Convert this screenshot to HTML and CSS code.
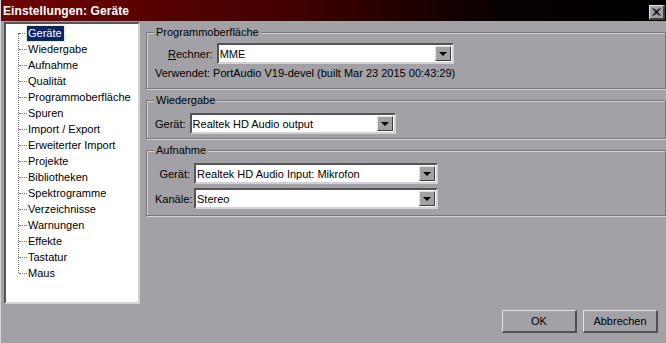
FILE: index.html
```html
<!DOCTYPE html>
<html lang="de">
<head>
  <meta charset="UTF-8">
  <title>Einstellungen: Geräte</title>
  <link rel="stylesheet" href="styles.css">
</head>
<body>
  <div class="window">
    <div class="titlebar">
      <span class="title">Einstellungen: Geräte</span>
      <div class="close-btn">
        <svg width="9" height="8" viewBox="0 0 9 8"><path d="M0.5 0.5 L7 7.5 M2 0.5 L8.5 7.5 M7 0.5 L0.5 7.5 M8.5 0.5 L2 7.5" stroke="#000" stroke-width="1"/></svg>
      </div>
    </div>
    <div class="content">
      <div class="tree">
        <div class="tree-line"></div>
        <div class="item selected"><span>Geräte</span></div>
        <div class="item"><span>Wiedergabe</span></div>
        <div class="item"><span>Aufnahme</span></div>
        <div class="item"><span>Qualität</span></div>
        <div class="item"><span>Programmoberfläche</span></div>
        <div class="item"><span>Spuren</span></div>
        <div class="item"><span>Import / Export</span></div>
        <div class="item"><span>Erweiterter Import</span></div>
        <div class="item"><span>Projekte</span></div>
        <div class="item"><span>Bibliotheken</span></div>
        <div class="item"><span>Spektrogramme</span></div>
        <div class="item"><span>Verzeichnisse</span></div>
        <div class="item"><span>Warnungen</span></div>
        <div class="item"><span>Effekte</span></div>
        <div class="item"><span>Tastatur</span></div>
        <div class="item"><span>Maus</span></div>
      </div>
      <div class="panel">
        <div class="group group-api">
          <span class="legend">Programmoberfläche</span>
          <div class="row">
            <label class="lbl lbl-rechner"><u>R</u>echner:</label>
            <div class="combo combo-rechner"><span class="value">MME</span><span class="arrow"></span></div>
          </div>
          <div class="info">Verwendet: PortAudio V19-devel (built Mar 23 2015 00:43:29)</div>
        </div>
        <div class="group group-play">
          <span class="legend">Wiedergabe</span>
          <div class="row">
            <label class="lbl">Gerät:</label>
            <div class="combo combo-play"><span class="value">Realtek HD Audio output</span><span class="arrow"></span></div>
          </div>
        </div>
        <div class="group group-rec">
          <span class="legend">Aufnahme</span>
          <div class="row">
            <label class="lbl lbl-wide">Gerät:</label>
            <div class="combo combo-rec"><span class="value">Realtek HD Audio Input: Mikrofon</span><span class="arrow"></span></div>
          </div>
          <div class="row">
            <label class="lbl lbl-wide">Kanäle:</label>
            <div class="combo combo-rec"><span class="value">Stereo</span><span class="arrow"></span></div>
          </div>
        </div>
      </div>
    </div>
    <div class="buttons">
      <div class="btn">OK</div>
      <div class="btn">Abbrechen</div>
    </div>
  </div>
</body>
</html>
```

FILE: styles.css
```css
body {
  margin: 0;
  font-family: "Liberation Sans", Arial, sans-serif;
  font-size: 11px;
  color: #000;
  background: #a2a1a6;
}

.window {
  width: 666px;
  height: 343px;
  display: flex;
  flex-direction: column;
  background: #a2a1a6;
  border-left: 1px solid #d4d3d8;
  box-sizing: border-box;
  overflow: hidden;
}

.titlebar {
  height: 21px;
  background: linear-gradient(90deg, #6e0303, #400000 45%, #080000 75%, #000 100%);
  display: flex;
  align-items: center;
  justify-content: space-between;
  padding: 0 1px 0 2px;
  flex-shrink: 0;
}

.title {
  color: #fff;
  font-weight: bold;
  font-size: 12px;
  letter-spacing: 0.1px;
}

.close-btn {
  width: 13px;
  height: 12px;
  background: #a2a1a6;
  border-top: 1px solid #e6e6e8;
  border-left: 1px solid #e6e6e8;
  border-right: 2px solid #404040;
  border-bottom: 2px solid #404040;
  display: flex;
  align-items: center;
  justify-content: center;
  margin-top: 3px;
}

.content {
  display: flex;
  padding: 1px 0 0 3px;
  height: 282px;
  flex-shrink: 0;
}

.tree {
  position: relative;
  width: 132px;
  height: 277px;
  background: #fff;
  border-top: 2px solid #555458;
  border-left: 2px solid #555458;
  border-right: 2px solid #d4d3d8;
  border-bottom: 2px solid #d4d3d8;
  padding-top: 1px;
  flex-shrink: 0;
}

.tree-line {
  position: absolute;
  left: 12px;
  top: 9px;
  height: 240px;
  border-left: 1px dotted #6f6f6f;
}

.item {
  height: 16px;
  display: flex;
  align-items: center;
  padding-left: 13px;
  white-space: nowrap;
}

.item::before {
  content: "";
  width: 8px;
  border-top: 1px dotted #6f6f6f;
}

.item span {
  padding: 1px 2px 2px 1px;
  line-height: 12px;
}

.item.selected span {
  background: #0a246a;
  color: #fff;
  outline: 1px dotted #d6d6a0;
}

.panel {
  flex: 1;
  padding: 10px 0 0 6px;
  display: flex;
  flex-direction: column;
  gap: 11px;
}

.group {
  position: relative;
  box-sizing: border-box;
  padding: 0 8px;
  border: 1px solid #76757a;
  box-shadow: inset 1px 1px 0 #d2d1d6, 1px 1px 0 #d2d1d6;
}

.legend {
  position: absolute;
  left: 7px;
  top: -7px;
  padding: 0 2px;
  background: #a2a1a6;
  line-height: 13px;
}

.group-api {
  height: 57px;
}

.group-play {
  height: 39px;
}

.group-rec {
  height: 66px;
}

.row {
  display: flex;
  align-items: center;
  margin-top: 12px;
}

.group-api .row {
  margin-top: 10px;
}

.group-rec .row + .row {
  margin-top: 4px;
}

.lbl {
  white-space: nowrap;
  margin-right: 4px;
}

.lbl-rechner {
  margin-left: 13px;
}

.lbl-wide {
  width: 35px;
  text-align: right;
}

.combo {
  box-sizing: border-box;
  height: 21px;
  background: #fff;
  border-top: 2px solid #545357;
  border-left: 2px solid #545357;
  border-right: 2px solid #d2d1d6;
  border-bottom: 2px solid #d2d1d6;
  display: flex;
  align-items: center;
  justify-content: space-between;
}

.combo .value {
  padding-left: 1px;
  white-space: nowrap;
}

.combo .arrow {
  width: 16px;
  height: 15px;
  margin-right: 1px;
  background: #a2a1a6;
  border-top: 1px solid #e0e0e3;
  border-left: 1px solid #e0e0e3;
  border-right: 1px solid #404040;
  border-bottom: 1px solid #404040;
  box-sizing: border-box;
  position: relative;
}

.combo .arrow::after {
  content: "";
  position: absolute;
  left: 3px;
  top: 5px;
  border-left: 4px solid transparent;
  border-right: 4px solid transparent;
  border-top: 4px solid #000;
}

.combo-rechner {
  width: 237px;
}

.combo-play {
  width: 206px;
}

.combo-rec {
  width: 244px;
}

.info {
  margin-top: 3px;
  white-space: nowrap;
}

.buttons {
  display: flex;
  justify-content: flex-end;
  gap: 6px;
  padding: 6px 8px 0 0;
}

.btn {
  box-sizing: border-box;
  width: 75px;
  height: 23px;
  background: #a2a1a6;
  border-top: 1px solid #e2e2e5;
  border-left: 1px solid #e2e2e5;
  border-right: 2px solid #505054;
  border-bottom: 2px solid #505054;
  display: flex;
  align-items: center;
  justify-content: center;
}
```
